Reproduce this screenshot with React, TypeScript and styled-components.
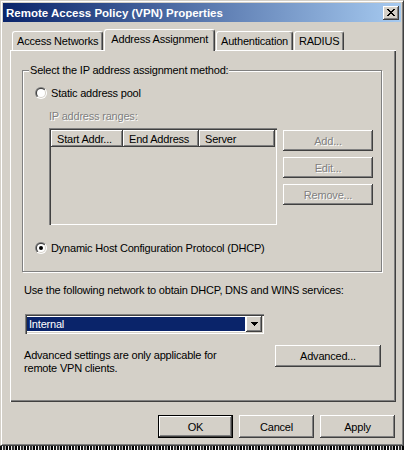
import React, { useId } from "react";
import styled, { createGlobalStyle } from "styled-components";

const Global = createGlobalStyle`
  html, body { margin: 0; padding: 0; background: #d4d0c8; }
  body {
    font-family: "Liberation Sans", Arial, sans-serif;
    font-size: 11px;
    letter-spacing: -0.2px;
    color: #000;
  }
  * { box-sizing: border-box; }
`;

const raised = `box-shadow: inset -1px -1px #404040, inset 1px 1px #fff, inset -2px -2px #808080;`;
const sunken = `box-shadow: inset 1px 1px #808080, inset 2px 2px #404040, inset -1px -1px #fff, inset -2px -2px #d4d0c8;`;

const Page = styled.div`
  width: 404px;
  height: 450px;
  display: flex;
  flex-direction: column;
  overflow: hidden;
`;

const Window = styled.div`
  height: 446px;
  background: #d4d0c8;
  border: 1px solid;
  border-color: #d4d0c8 #404040 #404040 #d4d0c8;
  box-shadow: inset 1px 1px #fff, inset -1px -1px #808080;
  padding: 2px;
  display: flex;
  flex-direction: column;
`;

const Noise = styled.div`
  height: 4px;
  background:
    repeating-linear-gradient(90deg, #111 0 2px, #f0f0f0 2px 3px, #333 3px 5px, #bbb 5px 6px, #000 6px 8px, #fff 8px 9px);
`;

const TitleBar = styled.div`
  height: 19px;
  display: flex;
  align-items: center;
  justify-content: space-between;
  padding: 0 2px 0 3px;
  background: linear-gradient(90deg, #0a246a, #a6caf0);
`;

const Title = styled.span`
  color: #fff;
  font-weight: bold;
  font-size: 11.5px;
  letter-spacing: 0;
`;

const CloseButton = styled.div`
  width: 16px;
  height: 14px;
  background: #d4d0c8;
  ${raised}
  display: flex;
  align-items: center;
  justify-content: center;
  padding-bottom: 1px;
`;

const Body = styled.div`
  flex: 1;
  display: flex;
  flex-direction: column;
  padding: 7px 5px 0 7px;
`;

const TabRow = styled.div`
  display: flex;
  align-items: flex-end;
  padding-left: 2px;
  position: relative;
  z-index: 1;
`;

const Tab = styled.div<{ $active?: boolean }>`
  height: ${(p) => (p.$active ? 22 : 19)}px;
  margin: 0 1px ${(p) => (p.$active ? -1 : 0)}px 0;
  padding: 0 ${(p) => (p.$active ? 6 : 4)}px ${(p) => (p.$active ? 3 : 1)}px;
  background: #d4d0c8;
  border-top: 1px solid #fff;
  border-left: 1px solid #fff;
  border-right: 1px solid #404040;
  box-shadow: inset -1px 0 #808080;
  border-radius: 3px 3px 0 0;
  display: flex;
  align-items: center;
  white-space: nowrap;
`;

const Panel = styled.div`
  height: 352px;
  background: #d4d0c8;
  box-shadow: inset 1px 1px #fff, inset -1px -1px #404040, inset -2px -2px #808080;
  padding: 14px 14px 0 12px;
  display: flex;
  flex-direction: column;
`;

const Group = styled.fieldset`
  margin: 0;
  padding: 9px 12px 17px 12px;
  border: 1px solid #808080;
  box-shadow: inset 1px 1px #fff, 1px 1px #fff;
  min-width: 0;
`;

const Legend = styled.legend`
  padding: 0 1px;
  margin-left: -6px;
  line-height: 13px;
  background: #d4d0c8;
`;

const RadioRow = styled.div`
  display: flex;
  align-items: center;
  gap: 4px;
  height: 13px;
`;

const Ranges = styled.div`
  padding-left: 14px;
  margin-top: 11px;
  display: flex;
  flex-direction: column;
`;

const DisabledLabel = styled.div`
  color: #808080;
  text-shadow: 1px 1px #fff;
  line-height: 13px;
`;

const RangesBody = styled.div`
  display: flex;
  gap: 6px;
  margin-top: 5px;
`;

const ListView = styled.div`
  width: 228px;
  height: 97px;
  padding: 2px;
  background: #d4d0c8;
  ${sunken}
`;

const ListHeader = styled.div`
  display: flex;
`;

const HeaderCell = styled.div<{ $w: number }>`
  width: ${(p) => p.$w}px;
  height: 17px;
  padding-left: 6px;
  display: flex;
  align-items: center;
  white-space: nowrap;
  overflow: hidden;
  ${raised}
`;

const SideButtons = styled.div`
  display: flex;
  flex-direction: column;
  gap: 6px;
  padding-top: 2px;
`;

const Button = styled.button<{ $w: number; $h: number; $default?: boolean }>`
  width: ${(p) => p.$w}px;
  height: ${(p) => p.$h}px;
  font: inherit;
  letter-spacing: inherit;
  padding: 0;
  margin: 0;
  background: #d4d0c8;
  color: #000;
  border: ${(p) => (p.$default ? "1px solid #000" : "none")};
  ${raised}
  &:disabled {
    color: #808080;
    text-shadow: 1px 1px #fff;
  }
`;

const DhcpRow = styled(RadioRow)`
  margin-top: 16px;
`;

const Below = styled.div`
  padding: 0 1px 0 2px;
  display: flex;
  flex-direction: column;
`;

const Text = styled.div`
  line-height: 13px;
`;

const Prompt = styled(Text)`
  margin-top: 12px;
`;

const Select = styled.div`
  width: 239px;
  height: 20px;
  margin: 17px 0 0 1px;
  padding: 2px;
  background: #fff;
  ${sunken}
  display: flex;
`;

const SelectValue = styled.div`
  flex: 1;
  margin: 1px 1px 1px 0;
  background: #0a246a;
  color: #fff;
  padding-left: 2px;
  display: flex;
  align-items: center;
`;

const SelectArrow = styled.div`
  width: 16px;
  background: #d4d0c8;
  ${raised}
  display: flex;
  align-items: center;
  justify-content: center;
`;

const AdvancedRow = styled.div`
  display: flex;
  justify-content: space-between;
  align-items: flex-start;
  margin-top: 11px;
`;

const AdvancedText = styled(Text)`
  margin-top: 4px;
`;

const ButtonRow = styled.div`
  display: flex;
  justify-content: flex-end;
  gap: 6px;
  margin-top: 13px;
  padding-right: 1px;
`;

function Radio({ checked }: { checked?: boolean }) {
  const id = useId().replace(/:/g, "");
  return (
    <svg width="12" height="12" viewBox="0 0 12 12">
      <defs>
        <linearGradient id={`o${id}`} x1="0" y1="0" x2="1" y2="1">
          <stop offset="0.5" stopColor="#808080" />
          <stop offset="0.5" stopColor="#ffffff" />
        </linearGradient>
        <linearGradient id={`i${id}`} x1="0" y1="0" x2="1" y2="1">
          <stop offset="0.5" stopColor="#404040" />
          <stop offset="0.5" stopColor="#d4d0c8" />
        </linearGradient>
      </defs>
      <circle cx="6" cy="6" r="6" fill={`url(#o${id})`} />
      <circle cx="6" cy="6" r="5" fill={`url(#i${id})`} />
      <circle cx="6" cy="6" r="4" fill="#fff" />
      {checked && <circle cx="6" cy="6" r="2" fill="#000" />}
    </svg>
  );
}

function CloseGlyph() {
  return (
    <svg width="8" height="7" viewBox="0 0 8 7" shapeRendering="crispEdges">
      <path
        fill="#000"
        d="M0 0h2v1H0zM6 0h2v1H6zM1 1h2v1H1zM5 1h2v1H5zM2 2h4v1H2zM3 3h2v1H3zM2 4h4v1H2zM1 5h2v1H1zM5 5h2v1H5zM0 6h2v1H0zM6 6h2v1H6z"
      />
    </svg>
  );
}

function DownArrow() {
  return (
    <svg width="7" height="4" viewBox="0 0 7 4" shapeRendering="crispEdges">
      <path fill="#000" d="M0 0h7v1H0zM1 1h5v1H1zM2 2h3v1H2zM3 3h1v1H3z" />
    </svg>
  );
}

export default function App() {
  return (
    <>
      <Global />
      <Page>
        <Window>
          <TitleBar>
            <Title>Remote Access Policy (VPN) Properties</Title>
            <CloseButton>
              <CloseGlyph />
            </CloseButton>
          </TitleBar>
          <Body>
            <TabRow>
              <Tab>Access Networks</Tab>
              <Tab $active>Address Assignment</Tab>
              <Tab>Authentication</Tab>
              <Tab>RADIUS</Tab>
            </TabRow>
            <Panel>
              <Group>
                <Legend>Select the IP address assignment method:</Legend>
                <RadioRow>
                  <Radio />
                  <span>Static address pool</span>
                </RadioRow>
                <Ranges>
                  <DisabledLabel>IP address ranges:</DisabledLabel>
                  <RangesBody>
                    <ListView>
                      <ListHeader>
                        <HeaderCell $w={72}>Start Addr...</HeaderCell>
                        <HeaderCell $w={76}>End Address</HeaderCell>
                        <HeaderCell $w={76}>Server</HeaderCell>
                      </ListHeader>
                    </ListView>
                    <SideButtons>
                      <Button $w={90} $h={21} disabled>Add...</Button>
                      <Button $w={90} $h={21} disabled>Edit...</Button>
                      <Button $w={90} $h={21} disabled>Remove...</Button>
                    </SideButtons>
                  </RangesBody>
                </Ranges>
                <DhcpRow>
                  <Radio checked />
                  <span>Dynamic Host Configuration Protocol (DHCP)</span>
                </DhcpRow>
              </Group>
              <Below>
                <Prompt>Use the following network to obtain DHCP, DNS and WINS services:</Prompt>
                <Select>
                  <SelectValue>Internal</SelectValue>
                  <SelectArrow>
                    <DownArrow />
                  </SelectArrow>
                </Select>
                <AdvancedRow>
                  <AdvancedText>
                    Advanced settings are only applicable for
                    <br />
                    remote VPN clients.
                  </AdvancedText>
                  <Button $w={106} $h={22}>Advanced...</Button>
                </AdvancedRow>
              </Below>
            </Panel>
            <ButtonRow>
              <Button $w={75} $h={23} $default>OK</Button>
              <Button $w={75} $h={23}>Cancel</Button>
              <Button $w={75} $h={23}>Apply</Button>
            </ButtonRow>
          </Body>
        </Window>
        <Noise />
      </Page>
    </>
  );
}
